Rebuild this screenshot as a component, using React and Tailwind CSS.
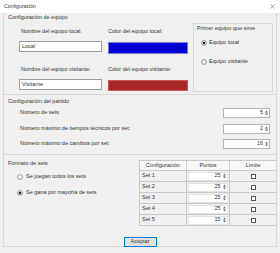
import React from "react";

const Radio = ({ checked }) => (
  <svg width="6" height="6" viewBox="0 0 6 6" className="shrink-0">
    <circle cx="3" cy="3" r="2.4" fill="white" stroke="#555" strokeWidth="0.6" />
    {checked && <circle cx="3" cy="3" r="1.3" fill="#222" />}
  </svg>
);

const Arrows = () => (
  <svg width="5" height="8" viewBox="0 0 5 8" className="shrink-0">
    <path d="M1 3.4 L2.5 1.6 L4 3.4Z M1 4.6 L2.5 6.4 L4 4.6Z" fill="#666" />
  </svg>
);

const Spin = ({ value, className }) => (
  <div className={`bg-white border border-[#b4b4b4] flex items-center justify-end ${className}`}>
    <span className="pr-[1px]">{value}</span>
    <Arrows />
  </div>
);

const Check = () => (
  <div className="w-[5px] h-[5px] border-[0.7px] border-[#555] bg-white" />
);

export default function App() {
  const sets = [
    ["Set 1", 25],
    ["Set 2", 25],
    ["Set 3", 25],
    ["Set 4", 25],
    ["Set 5", 15],
  ];
  return (
    <div className="w-[280px] h-[253px] bg-[#f0f0f0] flex flex-col overflow-hidden text-[#333] text-[5.5px] leading-none font-['Liberation_Sans',Arial,sans-serif]">
      {/* title bar */}
      <div className="h-[13px] bg-white flex items-center justify-between pl-[4px] pr-[5px] shrink-0">
        <span className="text-[5.2px]">Configuración</span>
        <svg width="5" height="5" viewBox="0 0 5 5">
          <path d="M0.5 0.5 L4.5 4.5 M4.5 0.5 L0.5 4.5" stroke="#666" strokeWidth="0.6" />
        </svg>
      </div>

      <div className="mx-[3px] h-[234px] border-x border-b border-[#d6d6d6] flex flex-col">
        {/* Section 1 */}
        <div className="h-[82px] border-b border-[#d6d6d6] shrink-0">
          <div className="h-[9px] flex items-center pl-[4px]">Configuración de equipo</div>
          <div className="flex">
            <div className="pl-[15px] flex flex-col">
              <div className="flex gap-[6px] mt-[6px]">
                <div className="w-[83px] h-[8px] flex items-center pl-[2px]">Nombre del equipo local:</div>
                <div className="w-[80px] h-[8px] flex items-center">Color del equipo local:</div>
              </div>
              <div className="flex gap-[6px] mt-[5px] items-start">
                <div className="w-[83px] h-[11px] bg-white border border-[#9c9c9c] flex items-center pl-[2px]">Local</div>
                <div className="w-[80px] h-[12px] mt-[1px] bg-[#0000d6] border border-[#7d7dc8]" />
              </div>
              <div className="flex gap-[6px] mt-[12px]">
                <div className="w-[83px] h-[8px] flex items-center pl-[2px]">Nombre del equipo visitante:</div>
                <div className="w-[80px] h-[8px] flex items-center">Color del equipo visitante:</div>
              </div>
              <div className="flex gap-[6px] mt-[5px] items-start">
                <div className="w-[83px] h-[11px] bg-white border border-[#9c9c9c] flex items-center pl-[2px]">Visitante</div>
                <div className="w-[80px] h-[11px] mt-[1px] bg-[#a82828] border border-[#c85a5a]" />
              </div>
            </div>
            <div className="ml-[5px] mt-[1px] w-[80px] h-[69px] border border-[#d6d6d6] flex flex-col pl-[3px]">
              <div className="h-[7px] mt-[1px] flex items-center">Primer equipo que sirve</div>
              <div className="flex items-center gap-[2px] mt-[8px] pl-[4px] h-[6px]">
                <Radio checked />
                <span>Equipo local</span>
              </div>
              <div className="flex items-center gap-[2px] mt-[13px] pl-[4px] h-[6px]">
                <Radio />
                <span>Equipo visitante</span>
              </div>
            </div>
          </div>
        </div>

        {/* Section 2 */}
        <div className="h-[60px] border-b border-[#d6d6d6] shrink-0 pt-[3px]">
          <div className="h-[8px] flex items-center pl-[4px]">Configuración del partido</div>
          <div className="flex flex-col gap-[5.5px] mt-[2px] pl-[16px] pr-[6px]">
            <div className="h-[10px] flex items-center justify-between">
              <span>Número de sets:</span>
              <Spin value="5" className="w-[47px] h-[10px]" />
            </div>
            <div className="h-[10px] flex items-center justify-between">
              <span>Número máximo de tiempos técnicos por set:</span>
              <Spin value="2" className="w-[47px] h-[10px]" />
            </div>
            <div className="h-[10px] flex items-center justify-between">
              <span>Número máximo de cambios por set:</span>
              <Spin value="16" className="w-[47px] h-[10px]" />
            </div>
          </div>
        </div>

        {/* Section 3 */}
        <div className="flex-1 flex flex-col">
          <div className="flex">
            <div className="w-[137px] pt-[5px]">
              <div className="h-[8px] flex items-center pl-[4px]">Formato de sets</div>
              <div className="flex items-center gap-[3px] mt-[6px] pl-[13px] h-[6px]">
                <Radio />
                <span>Se juegan todos los sets</span>
              </div>
              <div className="flex items-center gap-[3px] mt-[10px] pl-[13px] h-[6px]">
                <Radio checked />
                <span>Se gana por mayoría de sets</span>
              </div>
            </div>
            <div className="mt-[5px] w-[137px] border-l border-t border-[#c8c8c8]">
              <div className="flex h-[10px]">
                <div className="w-[47px] border-r border-b border-[#c8c8c8] bg-[#f7f7f7] flex items-center justify-center">Configuración</div>
                <div className="w-[44px] border-r border-b border-[#c8c8c8] bg-[#f7f7f7] flex items-center justify-center">Puntos</div>
                <div className="w-[46px] border-b border-[#c8c8c8] bg-[#f7f7f7] flex items-center justify-center">Límite</div>
              </div>
              {sets.map(([name, pts]) => (
                <div key={name} className="flex h-[11px]">
                  <div className="w-[47px] border-r border-b border-[#c8c8c8] flex items-center pl-[2px]">{name}</div>
                  <div className="w-[44px] border-r border-b border-[#c8c8c8] flex items-center pl-[1px]">
                    <Spin value={pts} className="w-[40px] h-[9px] border-[#e2e2e2]" />
                  </div>
                  <div className="w-[46px] border-b border-[#c8c8c8] flex items-center justify-center">
                    <Check />
                  </div>
                </div>
              ))}
            </div>
          </div>
          <div className="flex justify-center mt-[11px]">
            <div className="w-[33px] h-[10px] bg-[#e1e1e1] border border-[#0078d7] flex items-center justify-center">Aceptar</div>
          </div>
        </div>
      </div>
    </div>
  );
}
